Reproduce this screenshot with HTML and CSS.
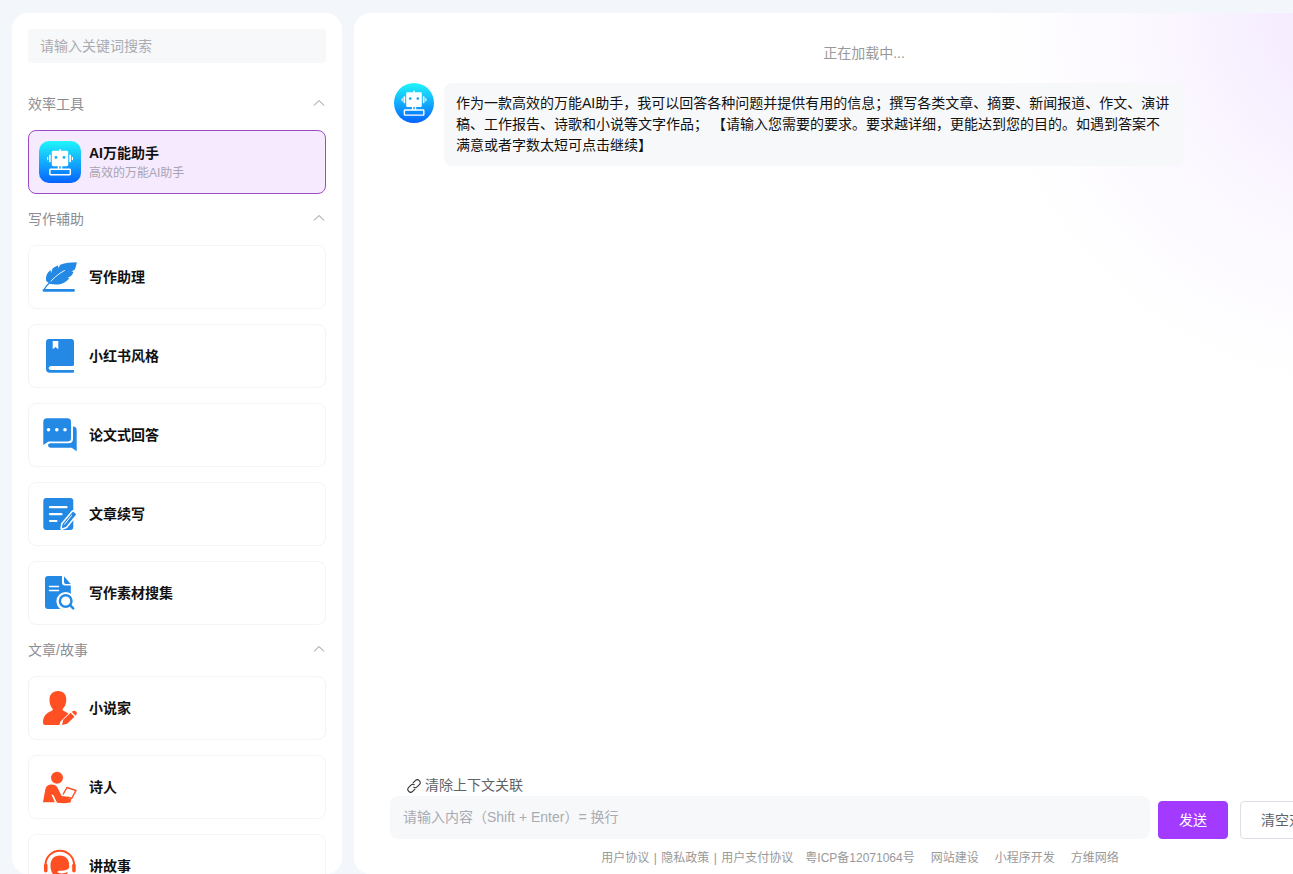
FILE: index.html
```html
<!DOCTYPE html>
<html lang="zh-CN">
<head>
<meta charset="utf-8">
<meta name="viewport" content="width=device-width, initial-scale=1">
<title>AI万能助手</title>
<link rel="stylesheet" href="styles.css">
</head>
<body>
<svg class="defs" aria-hidden="true">
  <defs>
    <linearGradient id="sky" x1="0" y1="0" x2="0" y2="1">
      <stop offset="0" stop-color="#1ff6fb"/>
      <stop offset="1" stop-color="#0563ff"/>
    </linearGradient>
    <symbol id="robot" viewBox="0 0 42 42">
      <rect width="42" height="42" fill="url(#sky)"/>
      <g fill="#fff">
        <rect x="20.2" y="8" width="1.6" height="3"/>
        <rect x="12.800" y="9.800" width="16.400" height="15.400" rx="1.400"/>
        <rect x="10" y="13.800" width="1.700" height="7.400" rx=".6"/>
        <rect x="8" y="16" width="1.200" height="3.200"/>
        <rect x="30.300" y="13.800" width="1.700" height="7.400" rx=".6"/>
        <rect x="32.800" y="16" width="1.200" height="3.200"/>
        <rect x="18.800" y="24.500" width="1.500" height="4"/>
        <rect x="21.800" y="24.500" width="1.500" height="4"/>
      </g>
      <rect x="10.900" y="28.300" width="20.400" height="5.400" rx=".6" fill="none" stroke="#fff" stroke-width="1.500"/>
      <circle cx="17" cy="16.400" r="1.400" fill="#17a9f5"/>
      <circle cx="25" cy="16.400" r="1.400" fill="#17a9f5"/>
    </symbol>
    <symbol id="chevron" viewBox="0 0 12 8">
      <path d="M1 6.500 6 1.500l5 5" fill="none" stroke="currentColor"/>
    </symbol>
  </defs>
</svg>
<div class="shell">
  <aside class="sidebar">
    <input class="search" type="search" placeholder="请输入关键词搜索" aria-label="请输入关键词搜索">

    <section class="group">
      <button class="group-head" type="button" aria-expanded="true">效率工具<svg class="chevron" aria-hidden="true"><use href="#chevron"/></svg></button>
      <div class="cards">
        <a class="card active" href="#assistant">
          <svg class="icon rounded" aria-hidden="true"><use href="#robot"/></svg>
          <span class="card-text"><strong class="name">AI万能助手</strong><span class="desc">高效的万能AI助手</span></span>
        </a>
      </div>
    </section>

    <section class="group">
      <button class="group-head" type="button" aria-expanded="true">写作辅助<svg class="chevron" aria-hidden="true"><use href="#chevron"/></svg></button>
      <div class="cards">
        <a class="card" href="#writing">
          <svg class="icon blue" viewBox="0 0 42 42" aria-hidden="true">
            <path d="M7.200 25C6.400 20.500 8 17 11.500 14l.6 3 1.400-4.600C15.500 11 17 10.200 19 9.500l.3 2.500 2-3.300c5-1.800 10.500-2.400 16.500-2.500-.5 2.800-1 5-2.200 7.600l-3.200 1.700 2.200.2c-.8 2-1.600 3.300-2.800 4.600l-3.300 1.300 2 .3c-3.500 4.300-7 6-11.500 6.500-3 .4-5.500-.2-8-.4z"/>
            <path class="line" d="M9.500 28C14 22.500 19 18 25.500 14.500" stroke="#fff" stroke-width=".9"/>
            <path class="line" d="M4.800 34C6.500 30.500 8.500 28.300 11.500 26" stroke="currentColor" stroke-width="1.300"/>
            <path d="M5 33h29.500a1 1 0 0 1 0 2.800H5a1.300 1.300 0 0 1 0-2.800z"/>
          </svg>
          <strong class="name">写作助理</strong>
        </a>
        <a class="card" href="#redbook">
          <svg class="icon blue" viewBox="0 0 42 42" aria-hidden="true">
            <path d="M10 4h22a3 3 0 0 1 3 3v22.500a1.500 1.500 0 0 1-1.500 1.500H12.500c-3.700 0-3.700 4 0 4H35v1.800a1 1 0 0 1-1 1H11a4 4 0 0 1-4-4V7a3 3 0 0 1 3-3z"/>
            <path d="M13.700 6h5.600v8.300l-2.800-2.400-2.800 2.400z" fill="#fff"/>
          </svg>
          <strong class="name">小红书风格</strong>
        </a>
        <a class="card" href="#paper">
          <svg class="icon blue" viewBox="0 0 42 42" aria-hidden="true">
            <path d="M8 4.300h20.500a3.500 3.500 0 0 1 3.500 3.500V24a3.500 3.500 0 0 1-3.500 3.500H9.500L4.300 31V8A3.700 3.700 0 0 1 8 4.300z"/>
            <path d="M34 12.600c2.500 0 3.700 1.200 3.700 3.700v21l-5-3.600H12c-2 0-3-1-3-3.200l2-1.200h18.500c3 0 4.500-1.500 4.500-4.500z"/>
            <g fill="#fff"><circle cx="9.500" cy="15.700" r="1.800"/><circle cx="17.800" cy="15.700" r="1.800"/><circle cx="26" cy="15.700" r="1.800"/></g>
          </svg>
          <strong class="name">论文式回答</strong>
        </a>
        <a class="card" href="#continue">
          <svg class="icon blue" viewBox="0 0 42 42" aria-hidden="true">
            <rect x="4.300" y="5" width="30" height="32" rx="3"/>
            <path class="line" d="M11 14.200h16.500M11 21.200h11.500M11 28h6.500" stroke="#fff" stroke-width="2.200"/>
            <path d="m34 18.500 3.200 2.700-10 12.600-4.400 1.700.7-4.500z" fill="#fff" stroke="#fff" stroke-width="3" stroke-linejoin="round"/>
            <path d="m34 18.500 3.200 2.700-10 12.600-4.400 1.700.7-4.500z" fill="currentColor"/>
            <path class="line" d="m32.500 22.500-7 8.700" stroke="#fff" stroke-width="1"/>
          </svg>
          <strong class="name">文章续写</strong>
        </a>
        <a class="card" href="#material">
          <svg class="icon blue" viewBox="0 0 42 42" aria-hidden="true">
            <path d="M9 4h14v6.500a3 3 0 0 0 3 3h5.800V37H9a3 3 0 0 1-3-3V7a3 3 0 0 1 3-3z"/>
            <path d="M25 4.300 31.700 12H27a2 2 0 0 1-2-2z"/>
            <path class="line" d="M10.500 14.400h9M10.500 18.500h9" stroke="#fff" stroke-width="1.500"/>
            <circle cx="26.700" cy="29.300" r="9.300" fill="#fff"/>
            <circle cx="26.700" cy="29" r="5.800" fill="#fff" stroke="currentColor" stroke-width="2.400"/>
            <path class="line" d="m31 33.200 3.200 3.200" stroke="currentColor" stroke-width="2.500"/>
          </svg>
          <strong class="name">写作素材搜集</strong>
        </a>
      </div>
    </section>

    <section class="group">
      <button class="group-head" type="button" aria-expanded="true">文章/故事<svg class="chevron" aria-hidden="true"><use href="#chevron"/></svg></button>
      <div class="cards">
        <a class="card" href="#novelist">
          <svg class="icon orange" viewBox="0 0 42 42" aria-hidden="true">
            <path d="M19 4c5.300 0 8.300 3.500 8.300 8.500 0 4-1.200 7-3.500 9.200-.6 1 0 1.700 1.200 2.300l4.500 2.400-8 8-1.200 3.600H6.500c-1.600 0-2.500-.8-2.500-2.500 0-6 3-9.500 8.500-11.500 1.400-.6 1.700-1.400.8-2.400-2-2.400-2.800-5.200-2.800-9C10.500 7.500 13.500 4 19 4z"/>
            <path d="m23 38 1.300-5.200 7.300-7 3.900 3.900-7.300 7z"/>
            <path d="m32.700 24.800 1.700-.9c1.900-.8 4 1.200 3.300 3.100l-1.200 1.700z"/>
          </svg>
          <strong class="name">小说家</strong>
        </a>
        <a class="card" href="#poet">
          <svg class="icon orange" viewBox="0 0 42 42" aria-hidden="true">
            <circle cx="18" cy="11.700" r="6"/>
            <path d="M4 36.300 6.300 23.500C7 20 9 18.400 12.500 18.400c3 0 4.800 1 6 3.300l4.200 8.400 4.700.3 2 1.800 3 1.200-1 3c-4.500 1-8 .9-13.400.3l-3.500-7.500-2.200-1 3.500 8.100z"/>
            <path d="M24 28.500 28 21.500l9 3-4.400 8-4.500-1.500" fill="none" stroke="currentColor" stroke-width="1.500" stroke-linejoin="round"/>
          </svg>
          <strong class="name">诗人</strong>
        </a>
        <a class="card" href="#story">
          <svg class="icon orange" viewBox="0 0 42 42" aria-hidden="true">
            <path class="line" d="M6.500 24v-4a14.300 14.300 0 0 1 28.600 0v4" stroke="currentColor" stroke-width="2"/>
            <path d="M20.800 10.500c6 0 9.300 4 9.300 9.500v3c-2 2-5 3-9 2.700-2.800-.2-3.600 2.300-.6 2.600 3.500.3 6-.3 8.400-1.500-1.500 4-4.500 6-8.100 6-5.500 0-9.300-5-9.300-12.300 0-6 3.300-10 9.300-10z"/>
            <rect x="5" y="18.500" width="3.500" height="9" rx="1.700"/>
            <rect x="33.200" y="18.500" width="3.500" height="9" rx="1.700"/>
            <path d="M7 38c1.500-4 5-5.500 8-5.500h11.500c4 0 7 1.500 8.500 5.500z"/>
          </svg>
          <strong class="name">讲故事</strong>
        </a>
      </div>
    </section>
  </aside>

  <main class="chat">
    <div class="messages">
      <p class="status">正在加载中...</p>
      <div class="message">
        <svg class="avatar" role="img" aria-label="AI万能助手"><use href="#robot"/></svg>
        <p class="bubble">作为一款高效的万能AI助手，我可以回答各种问题并提供有用的信息；撰写各类文章、摘要、新闻报道、作文、演讲稿、工作报告、诗歌和小说等文字作品； 【请输入您需要的要求。要求越详细，更能达到您的目的。如遇到答案不满意或者字数太短可点击继续】</p>
      </div>
    </div>
    <form class="composer">
      <button class="unlink" type="button">
        <svg class="link-icon" viewBox="0 0 16 16" aria-hidden="true">
          <g transform="rotate(-45 8 8)" fill="none" stroke="currentColor" stroke-width="1.100" stroke-linecap="round">
            <path d="M6.500 10.800H3.300a2.800 2.800 0 0 1 0-5.600h3.200a2.800 2.800 0 0 1 2.600 2"/>
            <path d="M9.500 5.200h3.200a2.800 2.800 0 0 1 0 5.600H9.500a2.800 2.800 0 0 1-2.600-2"/>
          </g>
        </svg>清除上下文关联</button>
      <div class="entry">
        <textarea class="prompt" rows="1" placeholder="请输入内容（Shift + Enter）= 换行" aria-label="请输入内容"></textarea>
        <button class="btn primary" type="submit">发送</button>
        <button class="btn clear" type="button">清空对话</button>
      </div>
    </form>
    <footer class="footer">
      <nav class="legal"><a href="#terms">用户协议</a><span class="bar">|</span><a href="#privacy">隐私政策</a><span class="bar">|</span><a href="#payment">用户支付协议</a></nav>
      <nav class="site"><a href="#icp">粤ICP备12071064号</a><a href="#web">网站建设</a><a href="#mini">小程序开发</a><a href="#fangwei">方维网络</a></nav>
    </footer>
  </main>
</div>
</body>
</html>
```
FILE: styles.css
```css
* {
  box-sizing: border-box;
}

body {
  margin: 0;
  background: #f3f6fb;
  color: #111;
  font: 14px/21px "Liberation Sans", "Noto Sans CJK SC", sans-serif;
}

a {
  color: inherit;
  text-decoration: none;
}

button,
input,
textarea {
  font: inherit;
}

p {
  margin: 0;
}

.defs {
  position: absolute;
  width: 0;
  height: 0;
}

.shell {
  display: flex;
  gap: 12px;
  height: 100vh;
  padding: 13px 12px 0;
  overflow: hidden;
}

/* Sidebar */
.sidebar {
  flex: 0 0 330px;
  padding: 16px;
  border-radius: 16px;
  background: #fff;
  overflow: hidden;
}

.search {
  display: block;
  width: 100%;
  height: 34px;
  margin-bottom: 16px;
  padding: 0 12px;
  border: 0;
  border-radius: 4px;
  background: #f7f8fa;
}

.search::placeholder,
.prompt::placeholder {
  color: #a9abb2;
  opacity: 1;
}

.group-head {
  display: flex;
  align-items: center;
  justify-content: space-between;
  width: 100%;
  height: 51px;
  padding: 0;
  border: 0;
  background: none;
  color: #8c8e94;
}

.chevron {
  width: 12px;
  height: 8px;
  margin: 0 1px 4px 0;
}

.cards {
  display: grid;
  gap: 15px;
}

.card {
  display: flex;
  align-items: center;
  gap: 8px;
  height: 64px;
  padding: 0 10px;
  border: 1px solid #f2f4f8;
  border-radius: 8px;
}

.card.active {
  border-color: #9a4cc4;
  background: #f6eaff;
}

.icon {
  flex: none;
  width: 42px;
  height: 42px;
  fill: currentColor;
}

.icon .line {
  fill: none;
  stroke-linecap: round;
}

.rounded {
  border-radius: 10px;
}

.blue {
  color: #2389e5;
}

.orange {
  color: #ff5023;
}

.card-text {
  display: grid;
}

.name {
  font-weight: 600;
}

.desc {
  color: #a8a4b0;
  font-size: 12px;
  line-height: 18px;
}

/* Chat */
.chat {
  display: flex;
  flex: 1 0 1012px;
  flex-direction: column;
  border-radius: 16px;
  background: radial-gradient(circle 380px at 100% 0, #f4e8ff, #f6eeff 25%, #fbf7ff 55%, #fff) #fff;
}

.messages {
  flex: 1;
  padding: 30px 32px 0 40px;
}

.status {
  margin-bottom: 19px;
  color: #999;
  text-align: center;
}

.message {
  display: flex;
  align-items: flex-start;
  gap: 10px;
}

.avatar {
  flex: none;
  width: 40px;
  height: 40px;
  border-radius: 50%;
}

.bubble {
  max-width: 740px;
  padding: 10px 12px;
  border-radius: 8px;
  background: #f7f8fa;
}

.composer {
  padding: 0 16px 0 36px;
}

.unlink {
  display: flex;
  align-items: center;
  gap: 3px;
  padding: 0 16px;
  border: 0;
  background: none;
  color: #606266;
}

.link-icon {
  width: 16px;
  height: 16px;
  color: #333;
}

.entry {
  display: flex;
  align-items: flex-end;
}

.prompt {
  flex: 1 0 760px;
  max-width: 760px;
  height: 43px;
  margin-right: 8px;
  padding: 11px 13px;
  border: 0;
  border-radius: 8px;
  background: #f7f8fa;
  resize: none;
}

.btn {
  flex: none;
  height: 38px;
  padding: 0 20px;
  border: 1px solid #dcdfe6;
  border-radius: 4px;
  background: #fff;
  color: #606266;
  white-space: nowrap;
}

.btn.primary {
  margin-right: 12px;
  border-color: #a23aff;
  background: #a23aff;
  color: #fff;
}

.footer {
  display: flex;
  justify-content: center;
  gap: 12px;
  padding: 10px 0 7px;
  color: #999;
  font-size: 12px;
  line-height: 18px;
}

.legal,
.site {
  display: flex;
}

.site {
  gap: 16px;
}

.bar {
  width: 12px;
  text-align: center;
}
```
